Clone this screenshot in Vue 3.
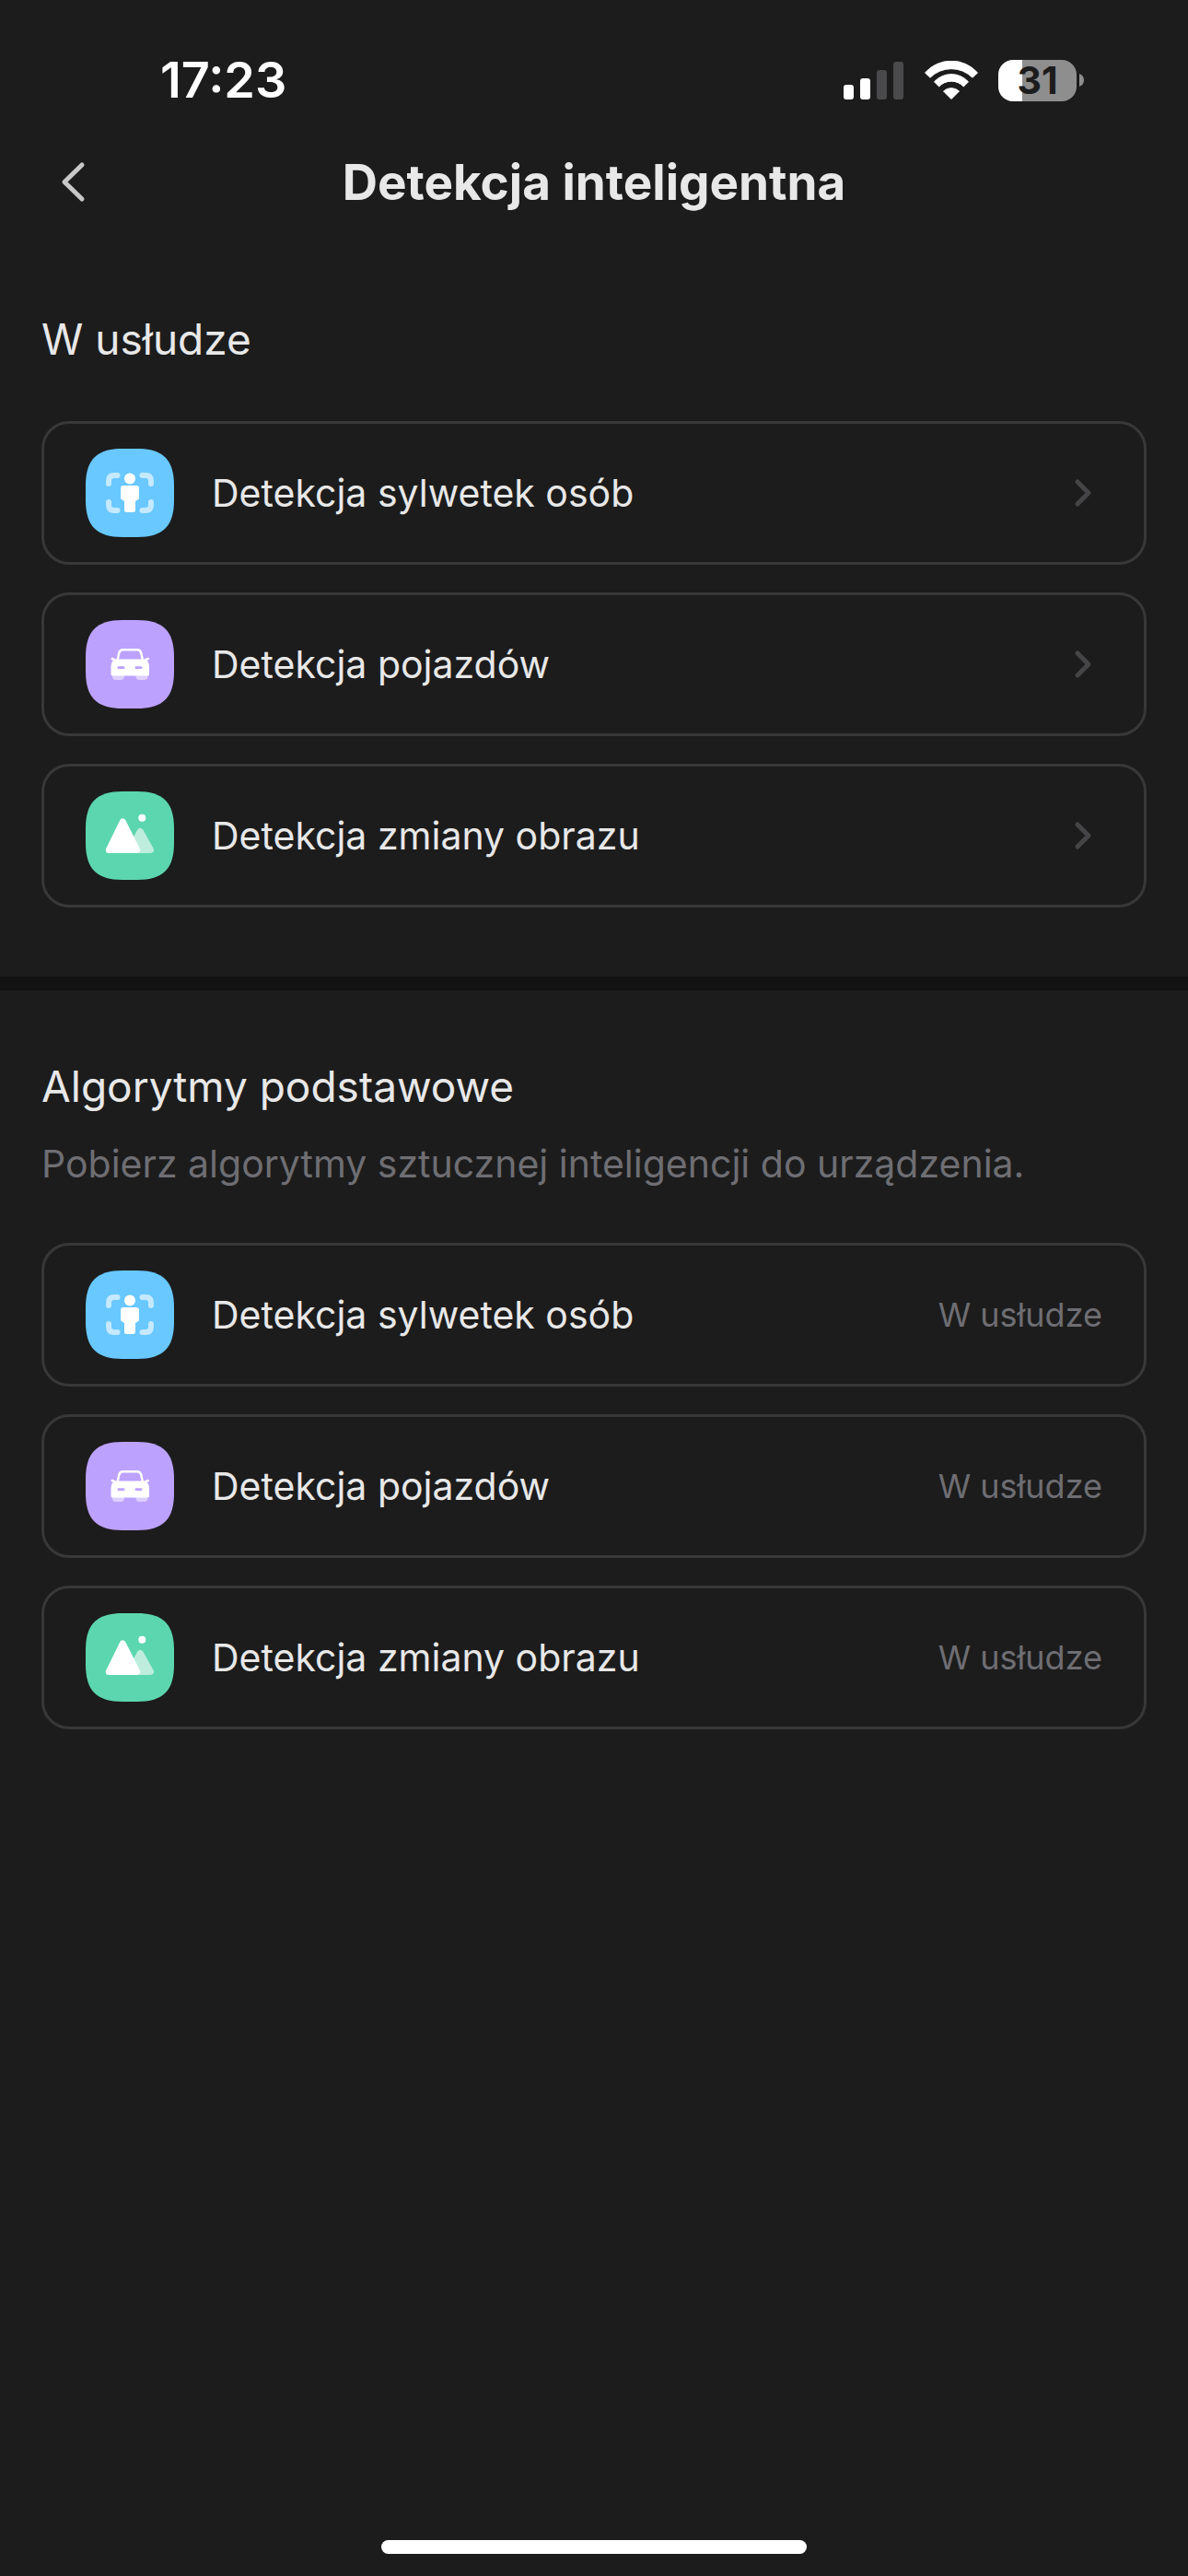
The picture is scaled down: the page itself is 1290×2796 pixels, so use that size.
<script setup>
const algorithms = [
  { kind: 'person', label: 'Detekcja sylwetek osób' },
  { kind: 'vehicle', label: 'Detekcja pojazdów' },
  { kind: 'scene', label: 'Detekcja zmiany obrazu' },
]

const sections = [
  { id: 'active', title: 'W usłudze', note: '', status: '', items: algorithms },
  {
    id: 'basic',
    title: 'Algorytmy podstawowe',
    note: 'Pobierz algorytmy sztucznej inteligencji do urządzenia.',
    status: 'W usłudze',
    items: algorithms,
  },
]
</script>

<template>
  <div class="screen">
    <div class="status-bar">
      <span class="time">17:23</span>
      <div class="indicators">
        <svg class="signal" viewBox="0 0 66 41" aria-hidden="true">
          <rect x="0" y="25" width="11" height="16" rx="3" fill="#fff" />
          <rect x="18" y="18" width="11" height="23" rx="3" fill="#fff" />
          <rect x="36" y="9" width="11" height="32" rx="3" fill="#4a4a4c" />
          <rect x="54" y="0" width="11" height="41" rx="3" fill="#4a4a4c" />
        </svg>
        <svg class="wifi" viewBox="0 0 58 42" aria-hidden="true">
          <g fill="#fff" stroke="#fff" stroke-width="1" stroke-linejoin="round">
            <path d="M.5 13A38 38 0 0 1 57.5 13L52 18.2A32.5 32.5 0 0 0 6 18.2Z" />
            <path d="M10.5 22.8A25 25 0 0 1 47.5 22.8L42.3 28A18 18 0 0 0 15.700 28Z" />
            <path d="M20.5 33A12.5 12.5 0 0 1 37.5 33L29 41.5Z" />
          </g>
        </svg>
        <div class="battery">
          <span class="battery-level">31</span>
          <svg class="battery-tip" viewBox="0 0 5 14" aria-hidden="true">
            <path d="M0 0Q5 2 5 7T0 14Z" fill="#8e8e8e" />
          </svg>
        </div>
      </div>
    </div>

    <header class="nav">
      <button class="back" type="button" aria-label="Wstecz">
        <svg viewBox="0 0 40 48" aria-hidden="true">
          <path d="M29 5L10 23.500L29 42" />
        </svg>
      </button>
      <h1>Detekcja inteligentna</h1>
    </header>

    <main>
      <section v-for="section in sections" :key="section.id">
        <h2>{{ section.title }}</h2>
        <p v-if="section.note" class="note">{{ section.note }}</p>
        <ul>
          <li v-for="item in section.items" :key="item.kind">
            <component
              :is="section.status ? 'div' : 'button'"
              :type="section.status ? null : 'button'"
              class="card"
            >
              <svg class="tile" :class="item.kind" viewBox="0 0 96 96" aria-hidden="true">
                <path
                  fill="currentColor"
                  d="M0 40C0 12 12 0 40 0H56C84 0 96 12 96 40V56C96 84 84 96 56 96H40C12 96 0 84 0 56Z"
                />
                <template v-if="item.kind === 'person'">
                  <g fill="none" stroke="#c5e9ff" stroke-width="6" stroke-linecap="round">
                    <path d="M25 38V35Q25 29 31 29H34.5" />
                    <path d="M61.5 29H65Q71 29 71 35V38" />
                    <path d="M71 58V61Q71 67 65 67H61.5" />
                    <path d="M34.5 67H31Q25 67 25 61V58" />
                  </g>
                  <circle cx="48" cy="32.5" r="6" fill="#fff" />
                  <path
                    fill="#fff"
                    d="M41 40H55Q58 40 58 43V53Q58 55 56.5 55.5L54 57V66.5Q54 69 51.5 69H44.5Q42 69 42 66.5V57L39.5 55.5Q38 55 38 53V43Q38 40 41 40Z"
                  />
                </template>
                <template v-else-if="item.kind === 'vehicle'">
                  <path
                    fill="#ddd0ff"
                    d="M29 58H42V61Q42 65 38 65H33Q29 65 29 61ZM54.5 58H67.5V61Q67.5 65 63.5 65H58.5Q54.5 65 54.5 61Z"
                  />
                  <path
                    fill="none"
                    stroke="#fff"
                    stroke-width="2.5"
                    d="M34.5 44L36.2 36Q37 32.3 40.5 32.3H56Q59.5 32.3 60.3 36L62 44"
                  />
                  <path
                    fill="none"
                    stroke="#fff"
                    stroke-width="2.5"
                    stroke-linecap="round"
                    d="M28.7 42L31.5 43.2M67.8 42L65 43.2"
                  />
                  <path
                    fill="#fff"
                    d="M33 42.5H63.5Q66 42.5 67.5 45Q69 47 69 50V59Q69 60.5 67.5 60.5H29Q27.5 60.5 27.5 59V50Q27.5 47 29 45Q30.5 42.5 33 42.5Z"
                  />
                  <rect x="34.5" y="50.3" width="8" height="2.8" rx="1.4" fill="currentColor" />
                  <rect x="53.5" y="50.3" width="8" height="2.8" rx="1.4" fill="currentColor" />
                </template>
                <template v-else>
                  <g stroke-width="7" stroke-linejoin="round">
                    <path d="M59.3 43.5L70.5 63.5H48Z" fill="#beeddd" stroke="#beeddd" />
                    <path d="M40.3 33L55.7 63.5H25.3Z" fill="#fff" stroke="#fff" />
                  </g>
                  <circle cx="61.3" cy="28.8" r="4" fill="#fff" />
                </template>
              </svg>
              <span class="label">{{ item.label }}</span>
              <span v-if="section.status" class="state">{{ section.status }}</span>
              <svg v-else class="chevron" viewBox="0 0 36 36" aria-hidden="true">
                <path d="M9 6L21 18L9 30" />
              </svg>
            </component>
          </li>
        </ul>
      </section>
    </main>

    <div class="home-indicator"></div>
  </div>
</template>

<style>
body {
  margin: 0;
  background: #1c1c1c;
}
</style>

<style scoped>
.screen {
  display: flex;
  flex-direction: column;
  box-sizing: border-box;
  min-height: 100vh;
  padding-bottom: 24px;
  background: #1c1c1c;
  color: #e8e8e8;
  font-family: Inter, "Liberation Sans", sans-serif;
}

.status-bar {
  display: flex;
  align-items: center;
  justify-content: space-between;
  padding: 42px 113px 0 174px;
  color: #fff;
}

.time {
  font-size: 54px;
  font-weight: 600;
  line-height: 90px;
}

.indicators {
  display: flex;
  align-items: center;
  gap: 22px;
}

.signal {
  width: 66px;
  height: 41px;
}

.wifi {
  width: 58px;
  height: 42px;
}

.battery {
  display: flex;
  align-items: center;
  gap: 3px;
}

.battery-level {
  width: 85px;
  border-radius: 16px;
  background: linear-gradient(90deg, #fff 26px, #8e8e8e 26px);
  color: #1c1c1c;
  font-size: 41px;
  font-weight: 700;
  line-height: 45px;
  text-align: center;
}

.battery-tip {
  width: 5px;
  height: 14px;
}

.nav {
  display: grid;
  grid-template-columns: 1fr auto 1fr;
  align-items: center;
  padding: 0 60px;
}

.back {
  justify-self: start;
  display: flex;
  padding: 0;
  border: 0;
  background: none;
}

.back svg {
  width: 40px;
  height: 48px;
  fill: none;
  stroke: #c8c8c8;
  stroke-width: 5;
  stroke-linecap: round;
  stroke-linejoin: round;
}

h1 {
  margin: 0;
  font-size: 53px;
  font-weight: 700;
  line-height: 132px;
}

section {
  padding: 75px 45px;
}

section + section {
  border-top: 15px solid #121212;
}

h2 {
  margin: 0;
  font-size: 46px;
  font-weight: 400;
  line-height: 58px;
}

.note {
  margin: 29px 0 0;
  color: #6e6e73;
  font-size: 41px;
  line-height: 52px;
}

ul {
  display: flex;
  flex-direction: column;
  gap: 30px;
  margin: 60px 0 0;
  padding: 0;
  list-style: none;
}

.card {
  display: flex;
  align-items: center;
  box-sizing: border-box;
  width: 100%;
  padding: 27px 45px;
  border: 3px solid #383838;
  border-radius: 30px;
  background: none;
  color: inherit;
  font: inherit;
  text-align: left;
}

.tile {
  flex: none;
  width: 96px;
  height: 96px;
}

.person {
  color: #68c8ff;
}

.vehicle {
  color: #bca1ff;
}

.scene {
  color: #5cd6ae;
}

.label {
  flex: 1;
  margin-left: 41px;
  font-size: 41px;
  line-height: 52px;
}

.state {
  color: #6e6e73;
  font-size: 36px;
  line-height: 52px;
}

.chevron {
  width: 36px;
  height: 36px;
  fill: none;
  stroke: #454547;
  stroke-width: 5;
  stroke-linecap: round;
  stroke-linejoin: round;
}

.home-indicator {
  align-self: center;
  width: 462px;
  height: 15px;
  margin-top: auto;
  border-radius: 8px;
  background: #fff;
}
</style>
